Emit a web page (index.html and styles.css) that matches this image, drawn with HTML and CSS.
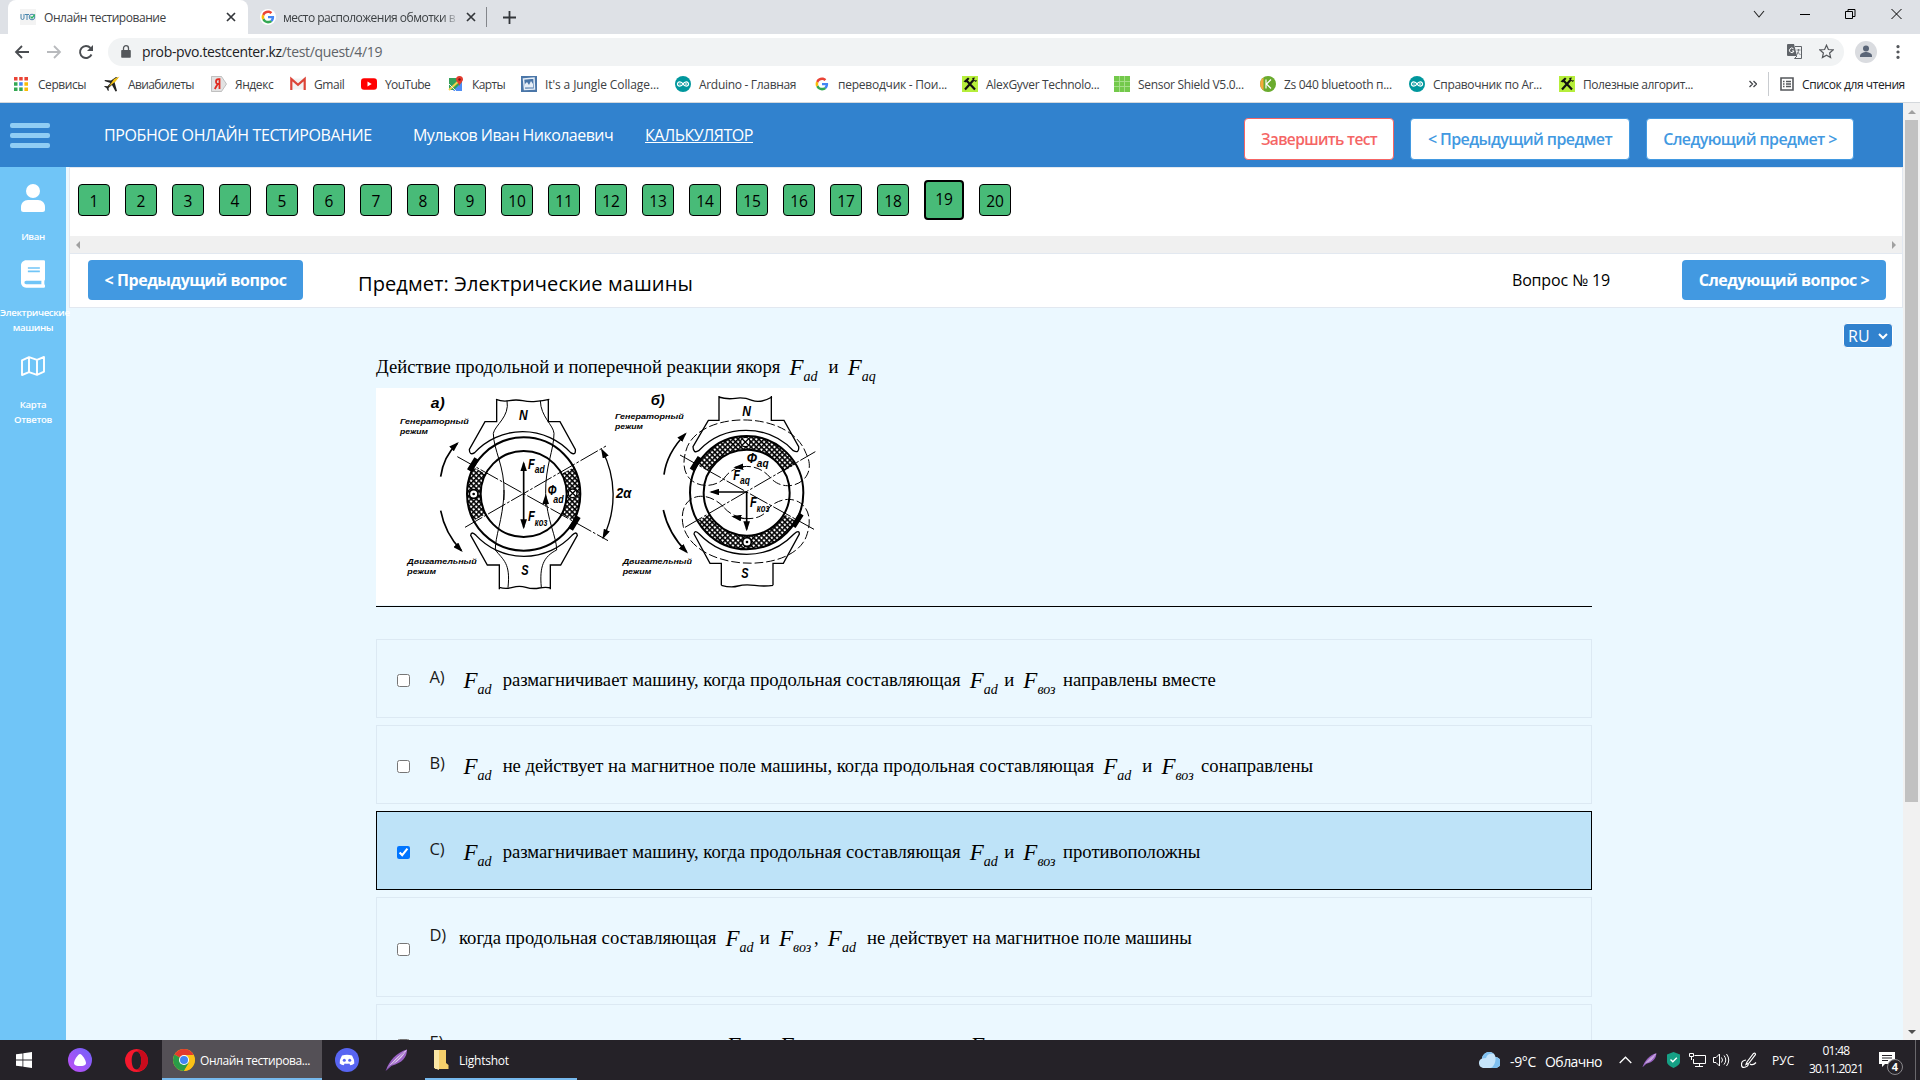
FILE: index.html
```html
<!DOCTYPE html>
<html lang="ru">
<head>
<meta charset="utf-8">
<title>Онлайн тестирование</title>
<link rel="stylesheet" href="styles.css">
</head>
<body>
<svg class="defs" width="0" height="0">
  <defs>
    <symbol id="google" viewBox="0 0 48 48"><path fill="#4285f4" d="M45 24.5c0-1.600-.1-2.800-.4-4H24v7.500h12c-.2 2-1.500 5-4.500 7l6.800 5.300C42.500 36.500 45 31 45 24.500z"/><path fill="#34a853" d="M24 46c6 0 11-2 14.500-5.500L31.600 35c-1.900 1.300-4.400 2.200-7.600 2.200-5.800 0-10.700-3.800-12.500-9.100l-7.100 5.500C8 41 15.400 46 24 46z"/><path fill="#fbbc05" d="M11.500 28.200c-.5-1.400-.7-2.800-.7-4.200s.3-2.900.7-4.200l-7.200-5.600C2.800 17.200 2 20.500 2 24s.9 6.800 2.400 9.700z"/><path fill="#ea4335" d="M24 10.700c4.100 0 6.900 1.800 8.500 3.300l6.200-6.100C35 4.300 30 2 24 2 15.400 2 8 7 4.300 14.200l7.200 5.600c1.800-5.300 6.700-9.100 12.500-9.100z"/></symbol>
    <symbol id="arduino" viewBox="0 0 16 16"><circle cx="8" cy="8" r="8" fill="#00979d"/><path d="M8 8C6.500 5.500 2.500 5 2.500 8S6.500 10.500 8 8s5.500-3 5.500 0S9.500 10.500 8 8z" fill="none" stroke="#fff" stroke-width="1.300"/><path d="M4 8h2M10 8h2M11 7v2" stroke="#fff" stroke-width=".7"/></symbol>
    <symbol id="gyver" viewBox="0 0 16 16"><path fill="#b6ee3b" d="M0 0h16v16H0z"/><path d="M3 13.500 11.500 4M13 13.500 4.500 4.500" stroke="#111" stroke-width="2.200"/><path d="M1.500 5.500 6 1.500l1.500 1.300L4 6.500zM10 2l1.500 2.500L14 6l1-2-2 .5-1-1L13 1.500z" fill="#111"/></symbol>
    <symbol id="feather" viewBox="0 0 24 24"><path d="M1 23C4 13 12 4 23 1c0 8-5 14-16 17z" fill="#9a62c4"/><path d="M1 23C7 14 13 8 23 1 18 10 12 15 5 18z" fill="#e3ccf4"/><path d="M1 23 20 4" stroke="#6d3a96" stroke-width=".8"/></symbol>
  </defs>
</svg>

<div class="tabs">
  <div class="tab tab-active">
    <svg width="16" height="16" viewBox="0 0 16 16"><path fill="#f3f3f3" d="M0 0h16v16H0z"/><path d="M1 5v4q0 1.500 1.500 1.500T4 9V5M5 5.500h4M7 5.500V11" fill="none" stroke="#4a86ad" stroke-width="1"/><circle cx="12" cy="8" r="2.800" fill="none" stroke="#4a86ad"/><path d="m10.500 7.500 1.500 1.500 3-3.500" fill="none" stroke="#2db36b" stroke-width="1.300"/></svg>
    <span class="tab-title">Онлайн тестирование</span>
    <svg width="10" height="10" viewBox="0 0 10 10"><path d="m1 1 8 8M9 1 1 9" stroke="#33363a" stroke-width="1.700"/></svg>
  </div>
  <div class="tab">
    <span class="tab-disc"><svg width="14" height="14"><use href="#google"/></svg></span>
    <span class="tab-title tab-fade">место расположения обмотки в</span>
    <svg width="10" height="10" viewBox="0 0 10 10"><path d="m1 1 8 8M9 1 1 9" stroke="#33363a" stroke-width="1.700"/></svg>
  </div>
  <svg class="new-tab" width="13" height="13" viewBox="0 0 13 13"><path d="M6.500 0v13M0 6.500h13" stroke="#33363a" stroke-width="1.800"/></svg>
  <div class="win-buttons">
    <svg width="12" height="12" viewBox="0 0 12 12"><path d="m1 3 5 6 5-6" fill="none" stroke="#222" stroke-width="1.100"/></svg>
    <svg width="10" height="12" viewBox="0 0 10 12"><path d="M0 6.500h10" stroke="#000"/></svg>
    <svg width="11" height="12" viewBox="0 0 11 12"><path d="M.5 3.500h7v7h-7zM3 3.500v-2h7v7H7.500" fill="none" stroke="#000"/></svg>
    <svg width="11" height="12" viewBox="0 0 11 12"><path d="m.5 1 10 10M10.500 1l-10 10" stroke="#000"/></svg>
  </div>
</div>

<div class="toolbar">
  <div class="nav">
    <svg width="16" height="16" viewBox="0 0 16 16"><path d="M15 8H2M8 2 2 8l6 6" fill="none" stroke="#4a4d51" stroke-width="1.800"/></svg>
    <svg width="16" height="16" viewBox="0 0 16 16"><path d="M1 8h13M8 2l6 6-6 6" fill="none" stroke="#b8babd" stroke-width="1.800"/></svg>
    <svg width="16" height="16" viewBox="0 0 16 16"><path d="M13.500 10.500A6 6 0 1 1 12.500 4" fill="none" stroke="#4a4d51" stroke-width="1.900"/><path d="M15 1v6H9z" fill="#4a4d51"/></svg>
  </div>
  <div class="omnibox">
    <svg width="10" height="13" viewBox="0 0 10 13"><path d="M1 5h8q.8 0 .8.800V12q0 .8-.8.800H1q-.8 0-.8-.8V5.800Q.2 5 1 5z" fill="#54575b"/><path d="M2.500 5V3.200a2.500 2.500 0 0 1 5 0V5" fill="none" stroke="#54575b" stroke-width="1.300"/></svg>
    <span class="url">prob-pvo.testcenter.kz<span class="path">/test/quest/4/19</span></span>
    <svg width="15" height="15" viewBox="0 0 15 15"><path d="M0 1q0-1 1-1h6l3 12H1q-1 0-1-1z" fill="#5f6368"/><path d="M8 2.500h6.500v12H7.500L10 12" fill="none" stroke="#5f6368"/><path d="M6.500 4.800A2.300 2.300 0 1 0 7 7H5" fill="none" stroke="#fff"/><path d="M9.500 6h4M11.500 5v1c0 2-1 4-2 5M10.500 8l3 3" fill="none" stroke="#5f6368" stroke-width=".8"/></svg>
    <svg class="star" width="15" height="15" viewBox="0 0 15 15"><path d="m7.500 1.200 1.900 4.300 4.700.4-3.500 3.100 1 4.600-4.100-2.400-4.100 2.400 1-4.600L.9 5.900l4.700-.4z" fill="none" stroke="#55585c" stroke-width="1.200"/></svg>
  </div>
  <svg width="22" height="22" viewBox="0 0 22 22"><circle cx="11" cy="11" r="11" fill="#dadce0"/><circle cx="11" cy="7.500" r="3" fill="#5a6577"/><path d="M5 16v-1c0-3 4-4 6-4s6 1 6 4v1z" fill="#5a6577"/></svg>
  <svg class="dots" width="4" height="14" viewBox="0 0 4 14"><path d="M2 0a1.600 1.600 0 1 0 .01 0zM2 5.400a1.600 1.600 0 1 0 .01 0zM2 10.800a1.600 1.600 0 1 0 .01 0z" fill="#55585c"/></svg>
</div>

<div class="bookmarks">
  <div class="apps"><svg width="14" height="14" viewBox="0 0 14 14"><path fill="#ea4335" d="M0 0h3.500v3.500H0zM5.200 0h3.500v3.500H5.200zM10.400 0H14v3.500h-3.600z"/><path fill="#34a853" d="M0 5.200h3.500v3.500H0zM0 10.400h3.500V14H0z"/><path fill="#4285f4" d="M5.200 5.200h3.500v3.500H5.200z"/><path fill="#fbbc05" d="M10.400 5.200H14v3.500h-3.600zM10.400 10.400H14V14h-3.600z"/><path fill="#34a853" d="M5.200 10.400h3.500V14H5.200z"/></svg><span>Сервисы</span></div>
  <div class="tight"><svg width="16" height="16" viewBox="0 0 16 16"><path d="M1 4l6 .5L12 1l2 1-3.500 4L13 15l-1.500.5L8 9l-3.500 3 .3 2.500L4 15l-1.500-3L0 10.500 1 10l2.500.2L6.500 7 .5 5z" fill="#222"/><path d="M15.500.5 10 3l-5.500 8 7-5.500z" fill="#f5c518"/></svg><span>Авиабилеты</span></div>
  <div class="mid"><svg width="16" height="16" viewBox="0 0 16 16"><path d="M.5.500h10l5 7.500-5 7.500H.5z" fill="#e2e2e2" stroke="#aaa" stroke-width=".7"/><path d="M8.500 13V3.200H7.300C4.300 3.200 4.300 8 7 8h1.500M6.500 8.200 3.800 13" fill="none" stroke="#e02b20" stroke-width="1.800"/></svg><span>Яндекс</span></div>
  <div class="mid"><svg width="16" height="16" viewBox="0 0 16 16"><path d="M1.500 2.500h13v11h-13z" fill="#f2f2f2"/><path d="M1.300 14V3L8 8.800 14.700 3v11" fill="none" stroke="#dc4437" stroke-width="2.200"/></svg><span>Gmail</span></div>
  <div class="tight"><svg width="16" height="16" viewBox="0 0 16 16"><rect y="2.200" width="16" height="11.600" rx="3" fill="#f00"/><path d="m6.500 5.600 4.200 2.400-4.200 2.400z" fill="#fff"/></svg><span>YouTube</span></div>
  <div class="tight"><svg width="16" height="16" viewBox="0 0 16 16"><path fill="#34a05a" d="M1 2h13v12H1z"/><path fill="#4f8df5" d="M5 15 14 6v9z"/><path d="M1 14 13 3" stroke="#f5d34c" stroke-width="2"/><path d="M1 8 8 15" stroke="#eee" stroke-width="1"/><path d="M11.500 0a3.500 3.500 0 0 1 3.500 3.500c0 2-2.500 3-3.500 6.500-1-3.500-3.500-4.500-3.500-6.500A3.500 3.500 0 0 1 11.500 0z" fill="#e33b2e"/><circle cx="11.500" cy="3.500" r="1.200" fill="#811411"/></svg><span>Карты</span></div>
  <div class="loose"><svg width="16" height="16" viewBox="0 0 16 16"><path fill="#4a76a8" d="M0 0h16v16H0z"/><path d="m2.500 3 10.500-1 .5 11-10 .5z" fill="#4a76a8" stroke="#e6eef7" stroke-width="1.500"/><path d="M4 11.500V8l2-2 2 3 2-4 2 3v3.500z" fill="#e6eef7"/></svg><span>It's a Jungle Collage...</span></div>
  <div><svg width="16" height="16"><use href="#arduino"/></svg><span>Arduino - Главная</span></div>
  <div class="g"><svg width="14" height="14"><use href="#google"/></svg><span>переводчик - Пои...</span></div>
  <div><svg width="16" height="16"><use href="#gyver"/></svg><span>AlexGyver Technolo...</span></div>
  <div><svg width="16" height="16" viewBox="0 0 16 16"><path fill="#73c94b" d="M0 0h16v16H0z"/><path d="M5.500 0v16M10.500 0v16M0 5.500h16M0 10.500h16" stroke="#a9e08e" stroke-width=".9"/></svg><span>Sensor Shield V5.0...</span></div>
  <div><svg width="16" height="16" viewBox="0 0 16 16"><circle cx="8" cy="8" r="8" fill="#6aab2e"/><path d="M3.500 1.500a8 8 0 0 0 0 13z" fill="#f5a93c"/><path d="M6 3.500v9M11 3.500 6.500 8l4.500 4.500" fill="none" stroke="#fff" stroke-width="1.200"/></svg><span>Zs 040 bluetooth п...</span></div>
  <div><svg width="16" height="16"><use href="#arduino"/></svg><span>Справочник по Ar...</span></div>
  <div class="mid"><svg width="16" height="16"><use href="#gyver"/></svg><span>Полезные алгорит...</span></div>
  <div class="more"><svg width="8" height="8" viewBox="0 0 8 8"><path d="m.5 1 3 3-3 3M4.500 1l3 3-3 3" fill="none" stroke="#44474b" stroke-width="1.300"/></svg></div>
  <div class="reading mid"><svg width="14" height="14" viewBox="0 0 14 14"><path d="M1 1h12v12H1z" fill="none" stroke="#55585c" stroke-width="1.600"/><path d="M3 4.500h1.500M6 4.500h5M3 7h1.500M6 7h5M3 9.500h1.500M6 9.500h5" stroke="#55585c" stroke-width="1.300"/></svg><span>Список для чтения</span></div>
</div>

<div class="page">
  <div class="site">
    <div class="header">
      <div class="burger"><i></i><i></i><i></i></div>
      <span class="brand">ПРОБНОЕ ОНЛАЙН ТЕСТИРОВАНИЕ</span>
      <span class="person">Мульков Иван Николаевич</span>
      <a class="calc">КАЛЬКУЛЯТОР</a>
      <div class="header-buttons">
        <div class="hbtn finish">Завершить тест</div>
        <div class="hbtn prev-subject">&lt; Предыдущий предмет</div>
        <div class="hbtn next-subject">Следующий предмет &gt;</div>
      </div>
    </div>
    <div class="body">
      <div class="sidebar">
        <svg width="24" height="28" viewBox="0 0 24 28"><circle cx="12" cy="7" r="7" fill="#fff"/><path d="M0 25.500V23c0-4 3-7 7-7h10c4 0 7 3 7 7v2.500q0 2.500-2.500 2.500h-19Q0 28 0 25.500z" fill="#fff"/></svg>
        <span class="side-text s1">Иван</span>
        <svg width="24" height="28" viewBox="0 0 448 512"><path fill="#fff" d="M448 360V24c0-13.300-10.700-24-24-24H96C43 0 0 43 0 96v320c0 53 43 96 96 96h328c13.300 0 24-10.700 24-24v-16c0-7.500-3.500-14.300-8.900-18.700-4.200-15.400-4.200-59.300 0-74.700 5.400-4.300 8.900-11.100 8.900-18.600zM128 134c0-3.300 2.700-6 6-6h212c3.300 0 6 2.700 6 6v20c0 3.300-2.700 6-6 6H134c-3.300 0-6-2.700-6-6v-20zm0 64c0-3.300 2.700-6 6-6h212c3.300 0 6 2.700 6 6v20c0 3.300-2.700 6-6 6H134c-3.300 0-6-2.700-6-6v-20zm253.400 250H96c-17.700 0-32-14.300-32-32 0-17.600 14.400-32 32-32h285.400c-1.900 17.100-1.900 46.900 0 64z"/></svg>
        <span class="side-text s2">Электрические<br>машины</span>
        <svg width="24" height="20" viewBox="0 0 24 20"><path d="M1 4.300 8 1.200l8 2.600 7-2.800v14.700l-7 3.100-8-2.600-7 2.800zM8 1.200v15M16 3.800v15" fill="none" stroke="#fff" stroke-width="1.900" stroke-linejoin="round"/></svg>
        <span class="side-text s3">Карта<br>Ответов</span>
      </div>
      <div class="main">
        <div class="numbers">
          <div class="num-row">
            <b>1</b><b>2</b><b>3</b><b>4</b><b>5</b><b>6</b><b>7</b><b>8</b><b>9</b><b>10</b><b>11</b><b>12</b><b>13</b><b>14</b><b>15</b><b>16</b><b>17</b><b>18</b><b class="current">19</b><b>20</b>
          </div>
          <div class="hscroll"><i class="left"></i><i class="right"></i></div>
        </div>
        <div class="question-bar">
          <div class="qbtn qprev">&lt; Предыдущий вопрос</div>
          <h1>Предмет: Электрические машины</h1>
          <span class="qnum">Вопрос № 19</span>
          <div class="qbtn qnext">Следующий вопрос &gt;</div>
        </div>
        <div class="lang"><span>RU</span><svg width="10" height="7" viewBox="0 0 10 7"><path d="m1 1 4 4 4-4" fill="none" stroke="#fff" stroke-width="2"/></svg></div>
        <div class="content">
          <p class="question">Действие продольной и поперечной реакции якоря <span class="f">F<sub>ad</sub></span>&nbsp; и <span class="f">F<sub>aq</sub></span></p>
          <svg class="figure" width="444" height="217" viewBox="18 114 1332 651">
            <defs>
              <pattern id="hatch" width="11" height="11" patternUnits="userSpaceOnUse" patternTransform="rotate(45)"><path fill="#fff" d="M0 0h11v11H0z"/><path d="M0 0h11M0 0v11" stroke="#000" stroke-width="9"/></pattern>
              <marker id="head" viewBox="0 0 10 10" refX="8" refY="5" markerWidth="30" markerHeight="20" markerUnits="userSpaceOnUse" orient="auto-start-reverse" preserveAspectRatio="none"><path d="M0 0 10 5 0 10z"/></marker>
            </defs>
            <path fill="#fff" d="M18 114h1332v651H18z"/>
            <g fill="none" stroke="#000" stroke-width="4">
              <path d="M380 148V215H345L298 298Q298 318 314 308A196 196 0 0 1 602 308Q618 318 616 298L570 215H535V148M378 148q20 8 40 4t40 0 40 2 40-6"/>
              <path d="M388 718V645H352L302 556Q304 542 318 556A196 196 0 0 0 606 556Q620 542 622 556L572 645H541V718M388 712q20 6 40 0t40 0 40 2 34 0"/>
              <path d="M329 362A150 150 0 0 0 329 502M593 362A150 150 0 0 1 593 502" stroke="url(#hatch)" stroke-width="40"/>
              <circle cx="461" cy="432" r="170" stroke-width="6"/><circle cx="461" cy="432" r="129" stroke-width="6"/>
              <path d="M411 152C420 200 375 225 370 250C370 300 405 350 402 430C398 510 375 560 376 600C400 630 422 640 414 712M511 152C512 200 550 225 552 250C552 300 525 350 527 430C530 510 560 560 560 600C520 620 508 650 514 712" stroke-width="3"/>
              <path d="M402 450v-30M527 470v-32" marker-end="url(#head)" stroke-width="3"/>
              <path d="M285 532 708 288M262 320 714 572" stroke-width="3" stroke-dasharray="60 6 8 6"/>
              <path d="M461 340V532" marker-start="url(#head)" marker-end="url(#head)" stroke-width="5"/>
              <path d="M696 300A290 290 0 0 1 700 562" marker-start="url(#head)" marker-end="url(#head)"/>
              <path d="M212 380Q220 320 262 280" marker-end="url(#head)" stroke-width="5"/><path d="M212 482Q225 550 274 602" marker-end="url(#head)" stroke-width="5"/>
              <path d="M298 362 320 326M602 538 625 500" stroke-width="16"/>
              <circle cx="311" cy="432" r="13" fill="#fff" stroke-width="5"/><circle cx="608" cy="430" r="13" fill="#fff"/><path d="m599 421 18 18M617 421l-18 18"/>
              <path d="M1047 138V211H1015L969 290Q970 312 986 302A196 196 0 0 1 1270 302Q1288 312 1286 290L1242 211H1204V138M1046 141q25 8 50 4t50 6 60-10"/>
              <path d="M1054 706V640H1020L972 552Q974 538 988 552A196 196 0 0 0 1272 552Q1288 538 1288 552L1240 640H1209V706M1054 706q30 8 50 2t50-2 55 0"/>
              <path d="M1000 353A150 150 0 0 1 1260 353M1000 503A150 150 0 0 0 1260 503" stroke="url(#hatch)" stroke-width="40"/>
              <circle cx="1130" cy="428" r="170" stroke-width="6"/><circle cx="1130" cy="428" r="129" stroke-width="6"/>
              <path d="M1060 388C1090 340 1160 335 1200 382C1250 440 1350 390 1308 310C1260 180 1000 180 952 290C910 400 1010 430 1060 388zM1060 470C1000 410 920 440 940 530C980 670 1280 675 1312 550C1340 460 1260 420 1200 470C1170 525 1090 510 1060 470z" stroke-width="3" stroke-dasharray="26 9"/>
              <path d="M930 315 1332 538M945 532 1336 305" stroke-width="3" stroke-dasharray="60 6 8 6"/>
              <path d="M1130 426H1024" marker-end="url(#head)" stroke-width="5"/><path d="M1130 426V538" marker-end="url(#head)" stroke-width="5"/>
              <path d="M1122 350l-26 2" marker-end="url(#head)"/><path d="M1124 506l-34-6" marker-end="url(#head)"/>
              <path d="M882 374Q890 310 946 252" marker-end="url(#head)" stroke-width="5"/><path d="M880 480Q895 550 950 606" marker-end="url(#head)" stroke-width="5"/>
              <path d="M966 360 990 322M1270 530 1294 492" stroke-width="16"/>
              <circle cx="1131" cy="576" r="13" fill="#fff" stroke-width="5"/><circle cx="1126" cy="276" r="14" fill="#fff"/><path d="m1116 266 20 20M1136 266l-20 20"/>
            </g>
            <circle cx="311" cy="432" r="4"/><circle cx="1131" cy="576" r="4"/>
            <g class="fig-cap">
              <text x="90" y="223" textLength="206" lengthAdjust="spacingAndGlyphs">Генераторный</text><text x="90" y="253" textLength="84" lengthAdjust="spacingAndGlyphs">режим</text>
              <text x="112" y="641" textLength="208" lengthAdjust="spacingAndGlyphs">Двигательный</text><text x="112" y="671" textLength="86" lengthAdjust="spacingAndGlyphs">режим</text>
              <text x="735" y="208" textLength="206" lengthAdjust="spacingAndGlyphs">Генераторный</text><text x="735" y="238" textLength="84" lengthAdjust="spacingAndGlyphs">режим</text>
              <text x="758" y="641" textLength="208" lengthAdjust="spacingAndGlyphs">Двигательный</text><text x="758" y="671" textLength="86" lengthAdjust="spacingAndGlyphs">режим</text>
            </g>
            <g class="fig-let">
              <text x="182" y="174" textLength="42" lengthAdjust="spacingAndGlyphs">а)</text><text x="842" y="166" textLength="42" lengthAdjust="spacingAndGlyphs">б)</text>
              <text x="447" y="211" textLength="26" lengthAdjust="spacingAndGlyphs">N</text><text x="1117" y="197" textLength="26" lengthAdjust="spacingAndGlyphs">N</text>
              <text x="454" y="674" textLength="22" lengthAdjust="spacingAndGlyphs">S</text><text x="1114" y="685" textLength="22" lengthAdjust="spacingAndGlyphs">S</text>
              <text x="738" y="444" textLength="46" lengthAdjust="spacingAndGlyphs">2α</text>
              <text x="474" y="356" textLength="50" lengthAdjust="spacingAndGlyphs">F<tspan dy="12" font-size="34">ad</tspan></text>
              <text x="533" y="434" textLength="26" lengthAdjust="spacingAndGlyphs">Ф</text><text x="550" y="459" textLength="31" lengthAdjust="spacingAndGlyphs" font-size="34">ad</text>
              <text x="474" y="514" textLength="58" lengthAdjust="spacingAndGlyphs">F<tspan dy="14" font-size="30">коз</tspan></text>
              <text x="1130" y="340" textLength="66" lengthAdjust="spacingAndGlyphs">Ф<tspan dy="12" font-size="34">aq</tspan></text>
              <text x="1090" y="390" textLength="50" lengthAdjust="spacingAndGlyphs">F<tspan dy="12" font-size="34">aq</tspan></text>
              <text x="1140" y="472" textLength="58" lengthAdjust="spacingAndGlyphs">F<tspan dy="14" font-size="30">коз</tspan></text>
            </g>
          </svg>
          <div class="answers">
            <label class="answer"><input type="checkbox"><span class="letter">A)</span><span class="text"><span class="f">F<sub>ad</sub></span>&nbsp; размагничивает машину, когда продольная составляющая <span class="f">F<sub>ad</sub></span> и <span class="f v">F<sub>воз</sub></span> направлены вместе</span></label>
            <label class="answer"><input type="checkbox"><span class="letter">B)</span><span class="text"><span class="f">F<sub>ad</sub></span>&nbsp; не действует на магнитное поле машины, когда продольная составляющая <span class="f">F<sub>ad</sub></span>&nbsp; и <span class="f v">F<sub>воз</sub></span> сонаправлены</span></label>
            <label class="answer chosen"><input type="checkbox" checked><span class="letter">C)</span><span class="text"><span class="f">F<sub>ad</sub></span>&nbsp; размагничивает машину, когда продольная составляющая <span class="f">F<sub>ad</sub></span> и <span class="f v">F<sub>воз</sub></span> противоположны</span></label>
            <label class="answer tall"><input type="checkbox"><span class="letter">D)</span><span class="text">когда продольная составляющая <span class="f">F<sub>ad</sub></span> и <span class="f v">F<sub>воз</sub></span>, <span class="f">F<sub>ad</sub></span>&nbsp; не действует на магнитное поле машины</span></label>
            <label class="answer"><input type="checkbox"><span class="letter">E)</span><span class="text e-text"><span class="f">F<sub>ad</sub></span><span class="f v">F<sub>воз</sub></span><span class="f">F<sub>ad</sub></span></span></label>
          </div>
        </div>
      </div>
    </div>
  </div>
  <div class="vscroll"><i class="up"></i><div class="thumb"></div><i class="down"></i></div>
</div>

<div class="taskbar">
  <svg class="win" width="16" height="16" viewBox="0 0 16 16"><path fill="#fff" d="M0 2.300 6.500 1.400v6.200H0zM7.300 1.300 16 0v7.600H7.300zM0 8.400h6.500v6.200L0 13.700zM7.300 8.400H16V16l-8.700-1.300z"/></svg>
  <svg class="alice" width="24" height="24" viewBox="0 0 24 24"><defs><linearGradient id="al" x1="0" y1="1" x2="1" y2="0"><stop stop-color="#c24df5"/><stop offset="1" stop-color="#6e63fa"/></linearGradient></defs><circle cx="12" cy="12" r="12" fill="url(#al)"/><path d="M12 6c2 0 6 6.500 6 9s-3 3-6 3-6-.5-6-3 4-9 6-9z" fill="#fff"/></svg>
  <svg class="opera" width="23" height="23" viewBox="0 0 23 23"><path d="M11.500 0a11.500 11.500 0 1 0 .01 0zM11.500 2.500c3 0 4.800 4 4.800 9s-1.800 9-4.800 9-4.800-4-4.800-9 1.800-9 4.800-9z" fill="#f5182d" fill-rule="evenodd"/><path d="M11.500 20.500c3 0 4.800-4 4.800-9s-1.800-9-4.800-9c3-3 11-.5 11.500 9-.5 9.500-8.500 12-11.500 9z" fill="#c90b1c"/></svg>
  <div class="task active">
    <svg width="22" height="22" viewBox="0 0 22 22"><circle cx="11" cy="11" r="11" fill="#fbc116"/><path d="M11 11 1.500 5.500A11 11 0 0 1 20.500 5.500z" fill="#e33b2e"/><path d="M1.500 5.500A11 11 0 0 0 11 22l5-8.500-5-2.500z" fill="#2a9d48"/><path d="M20.500 6H11v5l5 3-5 8A11 11 0 0 0 20.500 6z" fill="#fbc116"/><circle cx="11" cy="11" r="5" fill="#fff"/><circle cx="11" cy="11" r="4" fill="#4285f4"/></svg>
    <span>Онлайн тестирова...</span>
  </div>
  <svg class="discord" width="24" height="24" viewBox="0 0 24 24"><circle cx="12" cy="12" r="12" fill="#5865f2"/><path d="M7 7.500q5-1.700 10 0 2.500 4 2.300 8-2 1.500-4 1.700l-1-1.600q-2.300.5-4.600 0l-1 1.600q-2-.2-4-1.700Q4.500 11.500 7 7.500z" fill="#fff"/><circle cx="9.300" cy="12.300" r="1.500" fill="#5865f2"/><circle cx="14.700" cy="12.300" r="1.500" fill="#5865f2"/></svg>
  <svg class="feather" width="23" height="24"><use href="#feather"/></svg>
  <div class="task folder">
    <svg width="15" height="20" viewBox="0 0 15 20"><path d="M1 0h11v13l2.500 2v4H1z" fill="#f5cf6b"/><path d="M0 0h5v20l-5-2z" fill="#fbe7a5"/></svg>
    <span>Lightshot</span>
  </div>
  <div class="tray">
    <svg class="cloud" width="22" height="16" viewBox="0 0 22 16"><path d="M5 16a5 5 0 0 1-1-9.500C4.500 2.500 8 0 11 0c3.500 0 6 2 6.500 5A5.300 5.300 0 0 1 17 16z" fill="#c5e4fa"/><path d="M17.500 5A5.300 5.300 0 0 1 17 16h-5c3 0 6-5 5.500-11zM4 6.500C4.500 2.500 8 0 11 0c2 0 4 1 5 2-4-1-7 0-8 4z" fill="#7fc0f0"/></svg>
    <span class="temp">-9°C</span><span class="weather">Облачно</span>
    <svg class="chev" width="13" height="8" viewBox="0 0 13 8"><path d="m.7 7 5.800-5.800L12.300 7" fill="none" stroke="#fff" stroke-width="1.300"/></svg>
    <svg class="tf" width="15" height="16"><use href="#feather"/></svg>
    <svg class="shield" width="13" height="16" viewBox="0 0 13 16"><path d="M6.500 0 13 2.500V10q0 3-6.500 6Q0 13 0 10V2.500z" fill="#16a085"/><path d="m3.500 7.500 2.300 2.300 4-4" fill="none" stroke="#fff" stroke-width="1.400"/></svg>
    <svg class="net" width="17" height="14" viewBox="0 0 17 14"><path d="M5.500 2.500h11v8h-12V6M6 13.500h8M10.500 10.500v3M.5.500h4v3h-4zM2.500 3.500V7" fill="none" stroke="#fff"/></svg>
    <svg class="vol" width="17" height="14" viewBox="0 0 17 14"><path d="M.5 4.500H3L6.500 1v12L3 9.500H.5zM8.500 4.500q2 2.500 0 5M11 2.500q3.500 4.500 0 9M13.500 1q4.500 6 0 12" fill="none" stroke="#fff"/></svg>
    <svg class="pen" width="16" height="16" viewBox="0 0 16 16"><path d="M6 10 12.500 1.500q2-1 2 1L8 11l-3 1.500zM5 8Q.5 8.500.5 12.500t4 2.500Q8 14 7 11M9 12q3 2 6-1.500" fill="none" stroke="#fff" stroke-width="1.200"/></svg>
    <span class="kb">РУС</span>
    <span class="clock">01:48<br>30.11.2021</span>
    <div class="note"><svg width="16" height="15" viewBox="0 0 16 15"><path d="M0 0h16v12H6l-3 3v-3H0z" fill="#fff"/><path d="M3 3.500h10M3 6h10M3 8.500h6" stroke="#252228"/></svg><em>4</em></div>
  </div>
</div>
</body>
</html>
```
FILE: styles.css
```css
* { box-sizing: border-box; }
body { margin: 0; width: 1920px; height: 1080px; overflow: hidden; display: flex; flex-direction: column; background: #fff; font-family: "Open Sans", "Noto Sans", sans-serif; font-size: 16px; color: #000; }
svg { display: block; flex: none; }
svg.defs { position: absolute; }
span, a, .hbtn, .qbtn { white-space: nowrap; }

.tabs { height: 34px; flex: none; background: #dee1e6; display: flex; align-items: center; padding-left: 8px; font-size: 12px; letter-spacing: -0.45px; color: #3c4043; }
.tab { width: 240px; height: 34px; display: flex; align-items: center; padding: 0 12px; }
.tab-active { background: #fff; border-radius: 8px 8px 0 0; }
.tab-title { flex: 1; margin-left: 8px; overflow: hidden; }
.tab-fade { -webkit-mask-image: linear-gradient(90deg, #000 90%, transparent); mask-image: linear-gradient(90deg, #000 90%, transparent); margin-right: 6px; letter-spacing: -0.5px; }
.tab-disc { width: 16px; height: 16px; border-radius: 50%; background: #fff; display: flex; align-items: center; justify-content: center; }
.tab-disc + .tab-title { margin-left: 7px; }
.tab + .tab { width: 239px; height: 20px; border-right: 1px solid #83868b; padding-right: 10px; }
.new-tab { margin-left: 16px; }
.win-buttons { margin-left: auto; display: flex; gap: 35px; padding: 0 18px 6px 0; }

.toolbar { height: 35px; flex: none; display: flex; align-items: center; }
.nav { display: flex; gap: 16px; width: 108px; padding-left: 14px; }
.omnibox { width: 1736px; height: 28px; border-radius: 14px; background: #f1f3f4; display: flex; align-items: center; padding: 0 10px 0 13px; margin-right: 11px; }
.url { flex: 1; margin-left: 11px; font-size: 14px; letter-spacing: -0.34px; color: #202124; }
.path { color: #5f6368; }
.star { margin-left: 17px; }
.dots { margin-left: 19px; }

.bookmarks { height: 34px; flex: none; border-bottom: 1px solid #d4d8dc; display: grid; grid-template-columns: 90px 107px 79px 71px 87px 73px 154px 140px 147px 152px 146px 149px 150px 190px 24px 140px; padding: 0 0 3px 14px; align-items: center; font-size: 12px; letter-spacing: -0.31px; color: #3c4043; }
.bookmarks div { display: flex; align-items: center; gap: 8px; height: 24px; }
.bookmarks .apps { gap: 10px; letter-spacing: -0.45px; }
.bookmarks .g { gap: 9px; letter-spacing: -0.24px; }
.bookmarks .mid { letter-spacing: -0.42px; }
.bookmarks .tight { letter-spacing: -0.62px; }
.bookmarks .loose { letter-spacing: -0.1px; }
.bookmarks .reading { border-left: 1px solid #c9ccd0; padding-left: 11px; margin-left: -5px; color: #202124; }

.page { flex: 1; display: flex; min-height: 0; overflow: hidden; }
.site { width: 1903px; overflow: hidden; background: #ebf8ff; }
.header { height: 64px; background: #3182ce; color: #fff; display: flex; align-items: center; padding: 0 49px 0 10px; letter-spacing: -0.4px; }
.burger { width: 40px; display: flex; flex-direction: column; gap: 5px; margin-right: 54px; }
.burger i { height: 5px; border-radius: 2px; background: #90cdf4; }
.brand { width: 309px; }
.person { width: 232px; letter-spacing: -0.55px; }
.calc { text-decoration: underline; letter-spacing: -0.47px; }
.header-buttons { margin-left: auto; display: flex; gap: 16px; padding-top: 7px; }
.hbtn { height: 42px; display: flex; align-items: center; justify-content: center; background: #fff; border: 1px solid #4299e1; border-radius: 4px; color: #4299e1; font-weight: 600; letter-spacing: -0.58px; padding-top: 1px; }
.finish { width: 150px; border-color: #f56565; color: #f56565; font-size: 15.500px; letter-spacing: -0.65px; }
.prev-subject { width: 220px; }
.next-subject { width: 208px; }

.body { display: flex; }
.sidebar { width: 66px; flex: none; height: 890px; background: #70c5f7; color: #fff; display: flex; flex-direction: column; align-items: center; padding-top: 17px; font-size: 9.600px; font-weight: 600; letter-spacing: -0.35px; }
.side-text { width: 66px; text-align: center; line-height: 15px; z-index: 1; }
.s1 { margin: 17px 0 16px; }
.s2 { margin: 17px 0 21px; }
.s3 { margin-top: 21px; }
.main { width: 1834px; flex: none; margin-left: 3px; }
.numbers { height: 86px; background: #fff; border: 1px solid #e2e8f0; border-bottom: 0; }
.num-row { display: flex; height: 68px; gap: 15px; padding: 16px 0 0 8px; }
.num-row b { width: 32px; height: 32px; border: 1px solid #000; border-radius: 4px; background: #48bb78; font-weight: 400; font-size: 15.500px; line-height: 33px; text-align: center; }
.num-row .current { width: 40px; height: 40px; margin-top: -4px; border-width: 2px; line-height: 34px; }
.hscroll { height: 17px; background: #f0f0f0; display: flex; align-items: center; justify-content: space-between; padding: 0 6px; }
.hscroll i { border: 4px solid transparent; width: 0; height: 0; }
.hscroll .left { border-right-color: #a0a0a0; border-left-width: 0; }
.hscroll .right { border-left-color: #a0a0a0; border-right-width: 0; }
.question-bar { height: 55px; background: #fff; border: 1px solid #e2e8f0; display: flex; align-items: center; padding: 0 16px 1px 18px; }
.qbtn { height: 40px; border-radius: 4px; background: #4299e1; color: #fff; font-weight: 700; display: flex; align-items: center; justify-content: center; letter-spacing: -0.45px; }
.qprev { width: 215px; }
.qnext { width: 204px; margin-left: 72px; }
h1 { margin: 7px 0 0 55px; font-size: 20px; font-weight: 500; white-space: nowrap; letter-spacing: 0.1px; }
.qnum { margin-left: auto; letter-spacing: -0.17px; }
.lang { margin: 15px 10px 0 auto; width: 50px; height: 25px; border: 1px solid #fff; border-radius: 4px; background: #3182ce; color: #fff; display: flex; align-items: center; justify-content: space-between; padding: 1px 4px 0 4px; }

.content { width: 1216px; margin: 5px 0 0 307px; font-family: "Liberation Serif", serif; font-size: 18.670px; }
.question { margin: 0; height: 35px; line-height: 28px; white-space: nowrap; }
.f { display: inline-block; width: 34.300px; height: 20px; padding-left: 4.500px; font: italic 23px/20px "Liberation Serif", serif; position: relative; top: 2px; }
.f.v { width: 39.500px; }
.f sub { font-size: 14px; line-height: 0; vertical-align: -6px; }
.figure { background: #fff; }
.answers { border-top: 1px solid #000; margin-top: 1px; padding-top: 32px; display: flex; flex-direction: column; gap: 7px; }
.answer { height: 79px; flex: none; border: 1px solid #dce9f3; display: flex; align-items: center; }
.answer.tall { height: 100px; }
.answer.chosen { background: #bee3f8; border-color: #000; }
.answer input { width: 13px; height: 13px; margin: 4px 20px 0 19.500px; accent-color: #0075ff; }
.letter { align-self: flex-start; width: 29.500px; margin-top: 25px; font: 400 16.500px/24px "Open Sans", "Noto Sans", sans-serif; letter-spacing: -0.2px; color: #1a1a1a; }
.text { align-self: flex-start; margin-top: 28px; line-height: 24px; }
.e-text .f:first-child { margin-left: 263px; }
.e-text .v { margin: 0 151px 0 19px; }

.vscroll { width: 17px; background: #f1f1f1; display: flex; flex-direction: column; align-items: center; padding: 7px 0 6px; }
.vscroll i { border: 4px solid transparent; width: 0; height: 0; }
.vscroll .up { border-bottom-color: #a0a0a0; border-top-width: 0; }
.vscroll .down { border-top-color: #505050; border-bottom-width: 0; margin-top: auto; }
.thumb { width: 13px; height: 682px; margin-top: 6px; background: #c1c1c1; }

.taskbar { height: 40px; flex: none; background: #252228; color: #fff; display: flex; align-items: center; font-size: 12px; padding-left: 16px; }
.alice { margin-left: 36px; }
.opera { margin: 0 14px 0 33px; }
.task { height: 40px; border-bottom: 2px solid #76b9ed; display: flex; align-items: center; padding-top: 2px; letter-spacing: -0.25px; }
.task.active { width: 160px; background: #545056; padding-left: 11px; gap: 5px; letter-spacing: -0.41px; }
.discord { margin-left: 13px; }
.feather { margin-left: 26px; }
.folder { width: 152px; margin-left: 17px; padding-left: 9px; gap: 10px; }
.tray { margin-left: auto; display: flex; align-items: center; width: 442px; height: 40px; flex: none; }
.temp { width: 35px; margin-left: 10px; font-size: 14px; letter-spacing: -0.33px; padding-top: 2px; }
.weather { width: 74px; font-size: 14px; letter-spacing: -0.54px; padding-top: 2px; }
.tf { margin-left: 10px; }
.shield { margin-left: 10px; }
.net { margin-left: 9px; }
.vol { margin-left: 7px; }
.pen { margin: 0 15px 0 11px; }
.kb { width: 32px; }
.clock { width: 60px; text-align: center; line-height: 18px; letter-spacing: -0.7px; margin-left: 2px; }
.note { position: relative; margin-left: 13px; width: 37px; height: 18px; border-right: 1px solid #6a686c; height: 40px; padding-top: 12px; }
.note em { position: absolute; left: 8px; top: 19px; width: 16px; height: 16px; border: 1px solid #8a888c; border-radius: 50%; background: #252228; font: 700 11px/14px "Open Sans", sans-serif; text-align: center; }

.fig-cap text { font: italic 700 24px "Liberation Sans", sans-serif; }
.fig-let { font: italic 700 44px "Liberation Sans", sans-serif; }
```
